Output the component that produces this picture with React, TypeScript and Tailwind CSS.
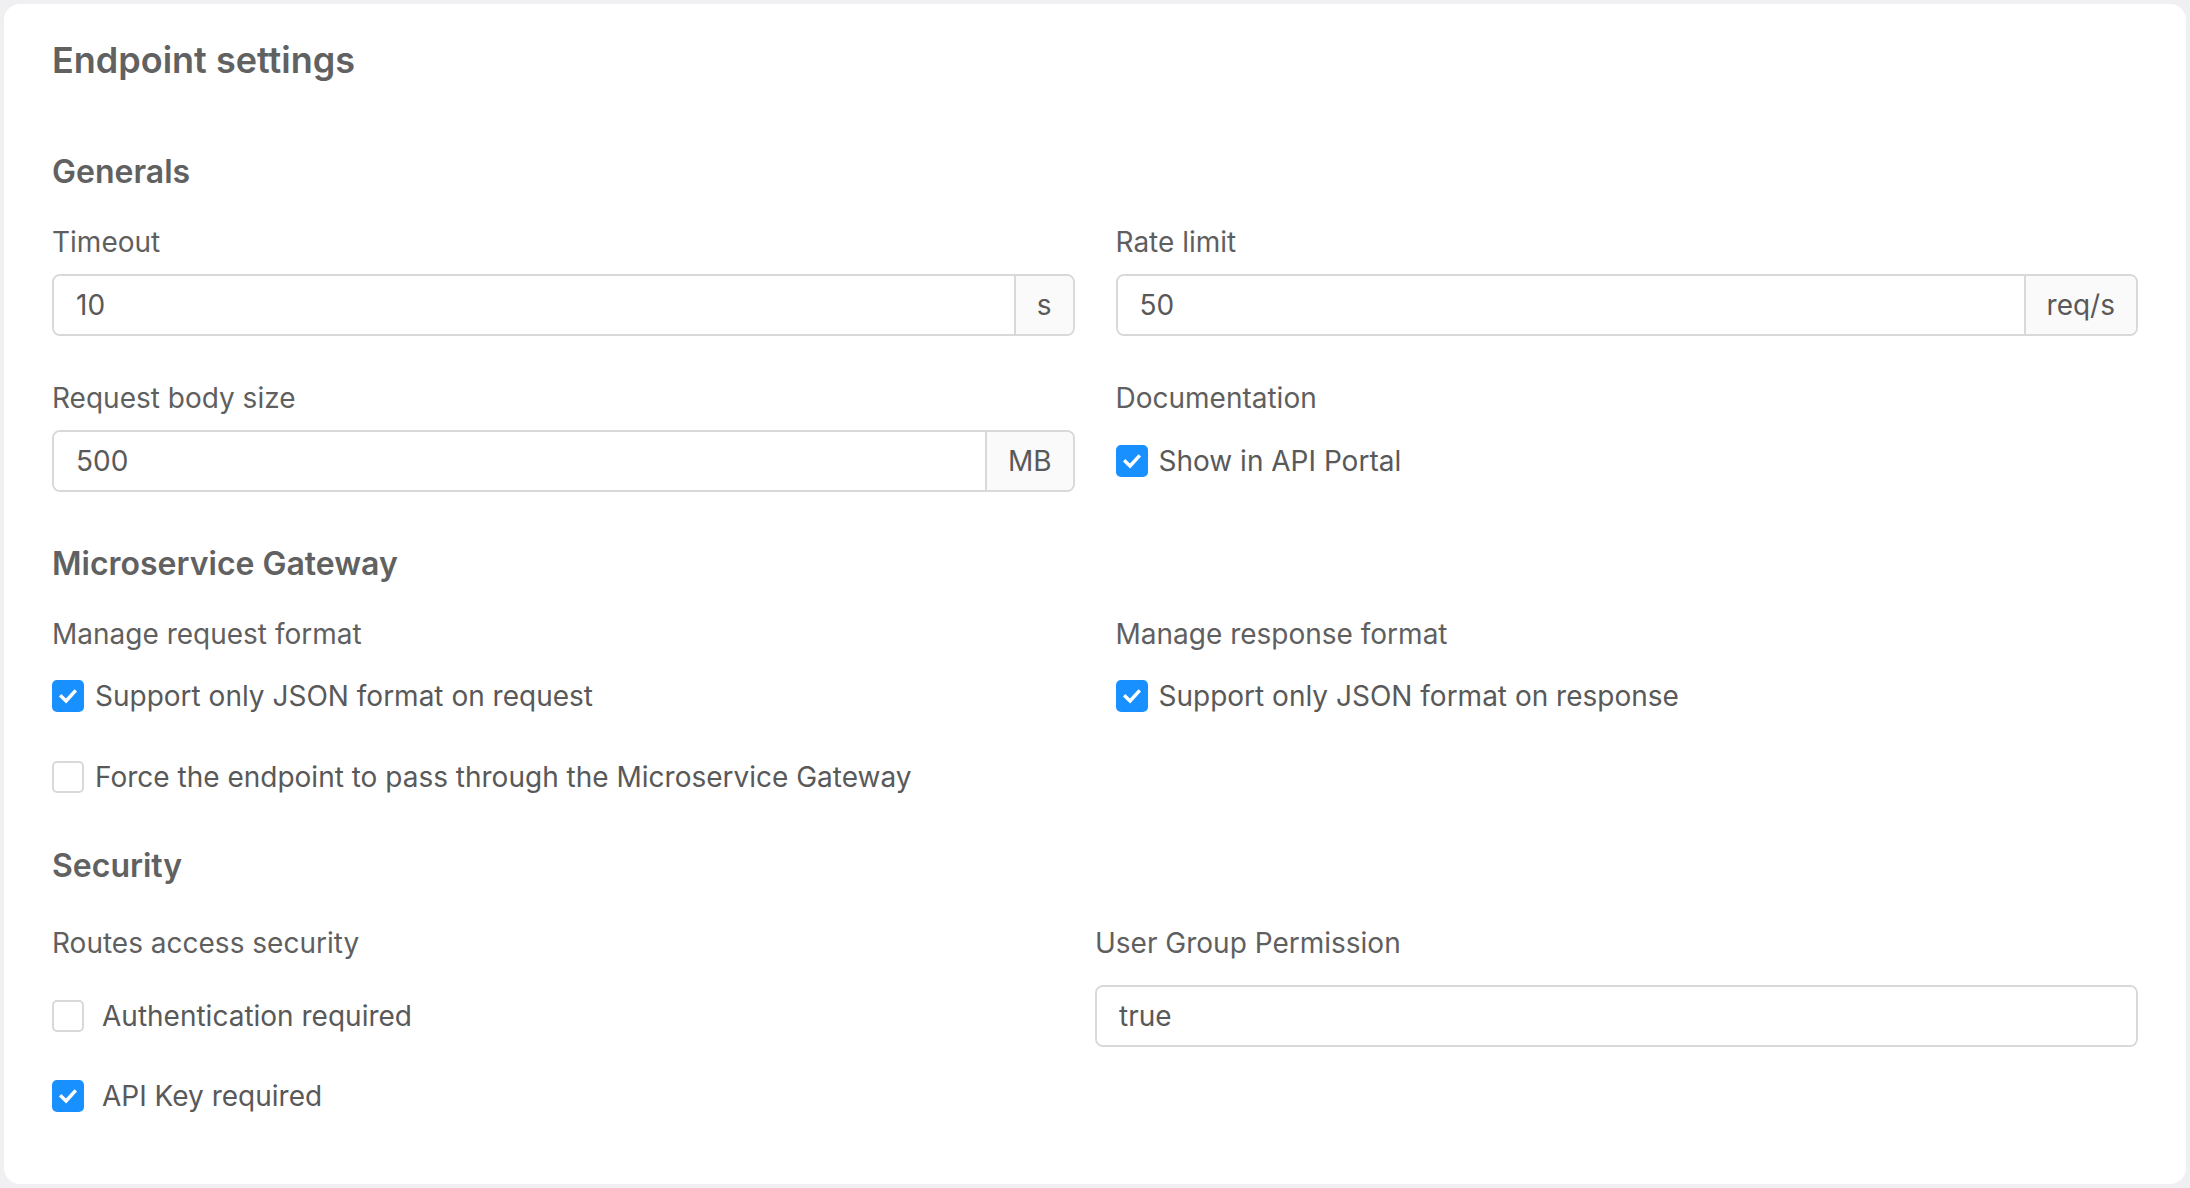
import React from "react";

type CheckProps = {
  checked?: boolean;
  label: string;
  gap?: string;
};

function Checkbox({ checked = false, label, gap = "gap-[11px]" }: CheckProps) {
  return (
    <label className={`flex h-10 items-center ${gap} cursor-pointer`}>
      {checked ? (
        <span className="flex h-8 w-8 shrink-0 items-center justify-center rounded-[5px] bg-[#1890ff]">
          <svg viewBox="0 0 16 16" className="h-[22px] w-[22px]" fill="none">
            <path
              d="M3.2 8.4 6.6 11.6 12.8 4.8"
              stroke="#ffffff"
              strokeWidth="2.5"
              strokeLinecap="square"
            />
          </svg>
        </span>
      ) : (
        <span className="h-8 w-8 shrink-0 rounded-[5px] border-2 border-[#d9d9d9] bg-white" />
      )}
      <span className="text-[28px] leading-10 text-[#595959]">{label}</span>
    </label>
  );
}

function Field({ label, value, unit }: { label: string; value: string; unit?: string }) {
  return (
    <div>
      <div className="text-[28px] leading-10 text-[#5f5f5f]">{label}</div>
      <div className="mt-3 flex h-[62px] overflow-hidden rounded-[8px] border-2 border-[#d9d9d9]">
        <input
          readOnly
          value={value}
          className="min-w-0 flex-1 bg-white pl-[22px] text-[28px] text-[#595959] outline-none"
        />
        {unit && (
          <span className="flex items-center border-l-2 border-[#d9d9d9] bg-[#fafafa] px-[21px] text-[28px] text-[#595959]">
            {unit}
          </span>
        )}
      </div>
    </div>
  );
}

export default function App() {
  return (
    <div className="min-h-screen bg-[#f0f0f3] p-1 font-['Inter','Liberation_Sans',sans-serif]">
      <div className="rounded-[16px] bg-white px-12 pb-[68px] pt-8">
        {/* Header */}
        <h1 className="text-[36px] font-semibold leading-[48px] text-[#616161]">
          Endpoint settings
        </h1>

        {/* Generals */}
        <h2 className="mt-[68px] text-[32px] font-semibold leading-10 text-[#616161]">Generals</h2>
        <div className="mt-[30px] grid grid-cols-2 gap-x-[41px] gap-y-[42px]">
          <Field label="Timeout" value="10" unit="s" />
          <Field label="Rate limit" value="50" unit="req/s" />
          <Field label="Request body size" value="500" unit="MB" />
          <div>
            <div className="text-[28px] leading-10 text-[#5f5f5f]">Documentation</div>
            <div className="mt-3 flex h-[62px] items-center">
              <Checkbox checked label="Show in API Portal" />
            </div>
          </div>
        </div>

        {/* Microservice Gateway */}
        <h2 className="mt-[52px] text-[32px] font-semibold leading-10 text-[#616161]">
          Microservice Gateway
        </h2>
        <div className="mt-[30px] grid grid-cols-2 gap-x-[41px]">
          <div>
            <div className="text-[28px] leading-10 text-[#5f5f5f]">Manage request format</div>
            <div className="mt-[22px] flex flex-col gap-[41px]">
              <Checkbox checked label="Support only JSON format on request" />
              <Checkbox label="Force the endpoint to pass through the Microservice Gateway" />
            </div>
          </div>
          <div>
            <div className="text-[28px] leading-10 text-[#5f5f5f]">Manage response format</div>
            <div className="mt-[22px] flex flex-col gap-[41px]">
              <Checkbox checked label="Support only JSON format on response" />
            </div>
          </div>
        </div>

        {/* Security */}
        <h2 className="mt-[49px] text-[32px] font-semibold leading-10 text-[#616161]">Security</h2>
        <div className="mt-[37px] grid grid-cols-2">
          <div>
            <div className="text-[28px] leading-10 text-[#5f5f5f]">Routes access security</div>
            <div className="mt-[33px] flex flex-col gap-10">
              <Checkbox label="Authentication required" gap="gap-[18px]" />
              <Checkbox checked label="API Key required" gap="gap-[18px]" />
            </div>
          </div>
          <div>
            <div className="text-[28px] leading-10 text-[#5f5f5f]">User Group Permission</div>
            <div className="mt-[22px] flex h-[62px] overflow-hidden rounded-[8px] border-2 border-[#d9d9d9]">
              <input
                readOnly
                value="true"
                className="min-w-0 flex-1 bg-white pl-[22px] text-[28px] text-[#595959] outline-none"
              />
            </div>
          </div>
        </div>
      </div>
    </div>
  );
}
